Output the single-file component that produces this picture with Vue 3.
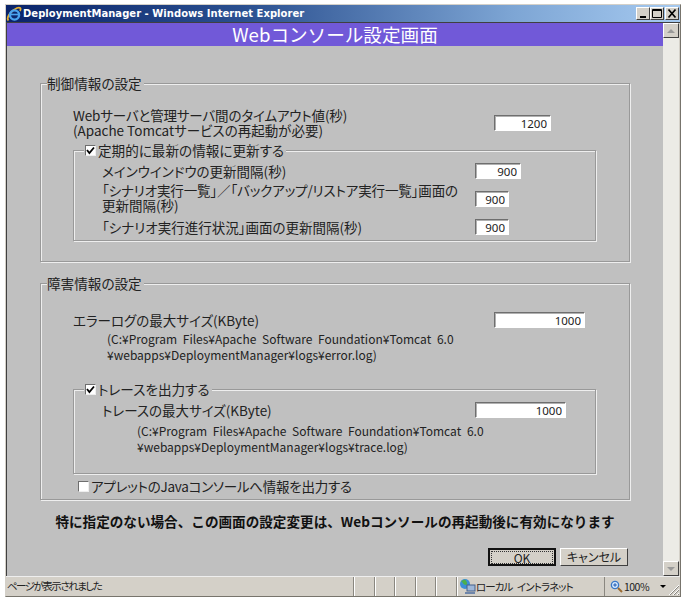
<script setup>
const zones = [1, 2, 3, 4, 5]
</script>

<template>
  <div class="page">
    <div class="window">
      <header class="titlebar">
        <svg class="ie" width="16" height="16" viewBox="0 0 16 16">
          <path d="M2.5 14.5 C0 12 4 5 11 2 C14 1 15.5 2 14 5" fill="none" stroke="#e8b030" stroke-width="1.8" />
          <circle cx="8.5" cy="9" r="4.6" fill="none" stroke="#4aa3ee" stroke-width="2.4" />
          <path d="M5 8.5 H13" stroke="#4aa3ee" stroke-width="1.6" />
        </svg>
        <span class="title-text">DeploymentManager - Windows Internet Explorer</span>
        <div class="caps">
          <span class="cap"><svg width="12" height="11" viewBox="0 0 12 11"><rect x="3" y="8" width="6" height="2" fill="#000" /></svg></span>
          <span class="cap"><svg width="12" height="11" viewBox="0 0 12 11"><path d="M1.5 1.5H10.5V9.5H1.5Z M1.5 2.5H10.5" fill="none" stroke="#000" /></svg></span>
          <span class="cap close"><svg width="12" height="11" viewBox="0 0 12 11"><path d="M2.5 1.5L9.5 9.5M9.5 1.5L2.5 9.5" stroke="#000" stroke-width="1.7" /></svg></span>
        </div>
      </header>

      <div class="viewport">
        <main class="content">
          <h1 class="banner">Webコンソール設定画面</h1>
          <div class="form">
            <fieldset class="group first">
              <legend>制御情報の設定</legend>
              <div class="row timeout">
                <label><span class="wide">Webサーバと管理サーバ間のタイムアウト値(秒)</span><br />(Apache Tomcatサービスの再起動が必要)</label>
                <input class="w57" value="1200" readonly />
              </div>
              <fieldset class="group inner refresh">
                <legend><span class="check"><svg width="9" height="9" viewBox="0 0 9 9"><path d="M1 4L3.4 7L8 1.5" fill="none" stroke="#000" stroke-width="1.8" /></svg></span>定期的に最新の情報に更新する</legend>
                <div class="row r1"><label>メインウインドウの更新間隔(秒)</label><input class="w46" value="900" readonly /></div>
                <div class="row r2"><label><span class="tight">「シナリオ実行一覧」／「バックアップ/リストア実行一覧」画面の</span><br />更新間隔(秒)</label><input class="w34 lower" value="900" readonly /></div>
                <div class="row r3"><label>「シナリオ実行進行状況」画面の更新間隔(秒)</label><input class="w34" value="900" readonly /></div>
              </fieldset>
            </fieldset>

            <fieldset class="group second">
              <legend>障害情報の設定</legend>
              <div class="row errlog">
                <label>エラーログの最大サイズ(KByte)</label>
                <input class="w91" value="1000" readonly />
              </div>
              <p class="path p1">(C:¥Program Files¥Apache Software Foundation¥Tomcat 6.0<br />¥webapps¥DeploymentManager¥logs¥error.log)</p>
              <fieldset class="group inner trace">
                <legend><span class="check"><svg width="9" height="9" viewBox="0 0 9 9"><path d="M1 4L3.4 7L8 1.5" fill="none" stroke="#000" stroke-width="1.8" /></svg></span>トレースを出力する</legend>
                <div class="row r4"><label>トレースの最大サイズ(KByte)</label><input class="w91" value="1000" readonly /></div>
                <p class="path p2">(C:¥Program Files¥Apache Software Foundation¥Tomcat 6.0<br />¥webapps¥DeploymentManager¥logs¥trace.log)</p>
              </fieldset>
              <div class="applet"><span class="check"></span>アプレットのJavaコンソールへ情報を出力する</div>
            </fieldset>

            <p class="note">特に指定のない場合、この画面の設定変更は、Webコンソールの再起動後に有効になります</p>
            <div class="actions">
              <button class="btn default"><span>OK</span></button>
              <button class="btn">キャンセル</button>
            </div>
          </div>
        </main>
        <aside class="scrollbar">
          <span class="arrow"><i class="up"></i></span>
          <span class="arrow"><i class="down"></i></span>
        </aside>
      </div>

      <footer class="statusbar">
        <div class="status-msg">ページが表示されました</div>
        <div v-for="z in zones" :key="z" class="zone"></div>
        <div class="intranet">
          <svg width="18" height="17" viewBox="0 0 18 17">
            <circle cx="7" cy="6" r="5" fill="#3c8fd8" />
            <path d="M3 3C5 4 5 7 8 7C10 7 9 3 7 1.5" fill="#4cb04c" />
            <rect x="9" y="7" width="8" height="6" fill="#9db6d8" stroke="#47618a" />
            <rect x="7" y="14" width="10" height="2" fill="#6f86aa" />
          </svg>
          <span class="zone-name">ローカル イントラネット</span>
        </div>
        <div class="zoom">
          <svg width="13" height="13" viewBox="0 0 13 13">
            <circle cx="5" cy="5" r="3.6" fill="#d8ecff" stroke="#3a78c8" stroke-width="1.4" />
            <path d="M3.2 5H6.8M5 3.2V6.8" stroke="#1b55b0" />
            <path d="M8 8L12 12" stroke="#9a6a30" stroke-width="2" />
          </svg>
          <span class="zoom-value">100%</span>
          <i class="caret"></i>
        </div>
        <svg class="grip" width="13" height="13" viewBox="0 0 13 13">
          <path d="M12 2L2 12M12 6L6 12M12 10L10 12" stroke="#fff" />
          <path d="M12 3L3 12M12 7L7 12M12 11L11 12" stroke="#8a8780" />
        </svg>
      </footer>
    </div>
  </div>
</template>

<style>
html, body { margin: 0; background: #fff; }
</style>

<style scoped>
.page {
  width: 685px;
  height: 600px;
  box-sizing: border-box;
  padding: 4px 4px 3px 5px;
  font-family: "Noto Sans CJK JP", "Noto Sans", sans-serif;
  font-size: 13.5px;
  font-feature-settings: "palt";
  color: #222;
  overflow: hidden;
}
.window {
  height: 100%;
  box-sizing: border-box;
  display: flex;
  flex-direction: column;
  background: #d4d0c8;
  border: 1px solid #d4d0c8;
  border-right-color: #77746c;
  border-bottom-color: #77746c;
}
.titlebar {
  height: 17px;
  display: flex;
  align-items: center;
  background: linear-gradient(90deg, #0a246a 0%, #2a4f8f 35%, #7da5d4 75%, #a6caf0 100%);
  color: #fff;
  flex: none;
}
.ie { margin: 0 1px 0 0; flex: none; }
.title-text {
  font-family: "DejaVu Sans", sans-serif;
  font-weight: 700;
  font-size: 10px;
  letter-spacing: 0.03px;
  white-space: nowrap;
}
.caps { margin-left: auto; display: flex; margin-right: 1px; }
.cap {
  width: 14px;
  height: 13px;
  background: #d4d0c8;
  border: 1px solid;
  border-color: #fff #404040 #404040 #fff;
  box-sizing: border-box;
  display: flex;
  align-items: center;
  justify-content: center;
}
.close { margin-left: 1px; }
.viewport {
  flex: 1;
  display: flex;
  min-height: 0;
  border-top: 1px solid #404040;
  border-left: 1px solid #404040;
}
.content { flex: 1; background: #c0c0c0; min-width: 0; }
.banner {
  margin: 0;
  height: 23px;
  line-height: 22px;
  background: #7159d8;
  color: #fff;
  text-align: center;
  font-size: 18.6px;
  font-weight: 400;
  font-feature-settings: normal;
}
.form { padding: 27px 33px 0 33px; }
.group {
  margin: 0;
  padding: 0;
  min-width: 0;
  box-sizing: border-box;
  border: 1px solid #999;
  box-shadow: inset 1px 1px 0 #eee, 1px 1px 0 #eee;
}
.group legend {
  padding: 0 2px 0 0;
  margin-left: 6px;
  background: #c0c0c0;
  line-height: 20px;
  font-size: 13.6px;
  white-space: nowrap;
}
.first { height: 189px; }
.second { height: 227px; margin-top: 11px; }
.inner { margin-left: 32px; width: 523px; }
.inner legend { margin-left: 10px; display: flex; align-items: center; padding-left: 1px; }
.row { display: flex; align-items: center; }
.row label { line-height: 15px; white-space: nowrap; }
.row input {
  box-sizing: border-box;
  height: 16px;
  border: 1px solid;
  border-color: #6e6e6e #fff #fff #6e6e6e;
  box-shadow: inset 1px 1px 0 #b0b0b0;
  background: #fff;
  text-align: right;
  font-family: "Noto Sans", sans-serif;
  font-size: 11.5px;
  color: #222;
  padding: 0 3px;
  outline: none;
}
.wide { letter-spacing: -0.15px; }
.tight { letter-spacing: -0.13px; }
.w57 { width: 57px; }
.w46 { width: 46px; }
.w34 { width: 34px; }
.w91 { width: 91px; }
.row input.lower { margin-top: 2px; }
.timeout { padding: 15px 0 0 32px; }
.timeout label { width: 421px; }
.refresh { margin-top: 2px; height: 101px; }
.inner .row { padding-left: 28px; }
.inner .row label { width: 373px; }
.r1 { margin-top: 3px; height: 16px; }
.r2 { margin-top: 4px; height: 30px; }
.r3 { margin-top: 6px; height: 16px; }
.errlog { padding: 19px 0 0 32px; }
.errlog label { width: 421px; }
.path {
  margin: 0;
  font-size: 12px;
  line-height: 15.5px;
  white-space: nowrap;
  word-spacing: 3px;
}
.p1 { padding: 3px 0 0 66px; }
.trace { margin-top: 17px; height: 95px; }
.r4 { margin-top: 3px; height: 16px; }
.p2 { padding: 5px 0 0 63px; }
.check {
  display: inline-flex;
  align-items: center;
  justify-content: center;
  box-sizing: border-box;
  width: 11px;
  height: 11px;
  margin-right: 2px;
  background: #fff;
  border: 1px solid;
  border-color: #6e6e6e #eee #eee #6e6e6e;
}
.applet {
  display: flex;
  align-items: center;
  margin: 3px 0 0 37px;
  line-height: 18px;
  white-space: nowrap;
  letter-spacing: -0.25px;
}
.note {
  margin: 11px 0 0 0;
  font-weight: 700;
  text-align: center;
  color: #111;
  font-size: 13.6px;
  line-height: 20px;
  font-feature-settings: normal;
}
.actions { display: flex; justify-content: flex-end; gap: 4px; margin-top: 17px; padding-right: 2px; }
.btn {
  width: 68px;
  height: 18px;
  padding: 0;
  background: #d4d0c8;
  border: 1px solid;
  border-color: #fff #404040 #404040 #fff;
  font: inherit;
  font-size: 12px;
  line-height: 14px;
  color: #222;
}
.default { border: 2px solid #111; }
.default span { display: block; margin: 1px; border: 1px dotted #333; line-height: 11px; }
.scrollbar {
  width: 16px;
  flex: none;
  margin-right: 1px;
  background: #ecebe6;
  display: flex;
  flex-direction: column;
  justify-content: space-between;
}
.arrow {
  height: 15px;
  background: #d4d0c8;
  border: 1px solid;
  border-color: #fff #404040 #404040 #fff;
  box-sizing: border-box;
  display: flex;
  align-items: center;
  justify-content: center;
}
.up, .down { width: 0; height: 0; border: 4px solid transparent; }
.up { border-bottom-color: #999; border-top-width: 0; }
.down { border-top-color: #999; border-bottom-width: 0; }
.statusbar {
  flex: none;
  height: 20px;
  display: flex;
  align-items: stretch;
  border-top: 1px solid #eee;
  font-size: 11px;
  position: relative;
  box-sizing: border-box;
}
.status-msg { width: 346px; padding-left: 1px; line-height: 18px; font-size: 10.5px; letter-spacing: -1.5px; border-right: 1px solid #8a8780; white-space: nowrap; }
.zone { width: 18.6px; border-right: 1px solid #8a8780; border-left: 1px solid #fff; }
.intranet { width: 146px; display: flex; align-items: center; gap: 0; border-right: 1px solid #8a8780; border-left: 1px solid #fff; }
.zone-name { font-size: 10.5px; letter-spacing: -0.9px; word-spacing: 3px; white-space: nowrap; }
.zoom { display: flex; align-items: center; gap: 1px; width: 60px; padding-left: 5px; }
.zoom-value { letter-spacing: -0.5px; font-size: 10.5px; }
.caret { width: 0; height: 0; border: 3px solid transparent; border-top-color: #000; border-bottom-width: 0; margin-left: 10px; }
.grip { position: absolute; right: 0; bottom: 0; }
</style>
